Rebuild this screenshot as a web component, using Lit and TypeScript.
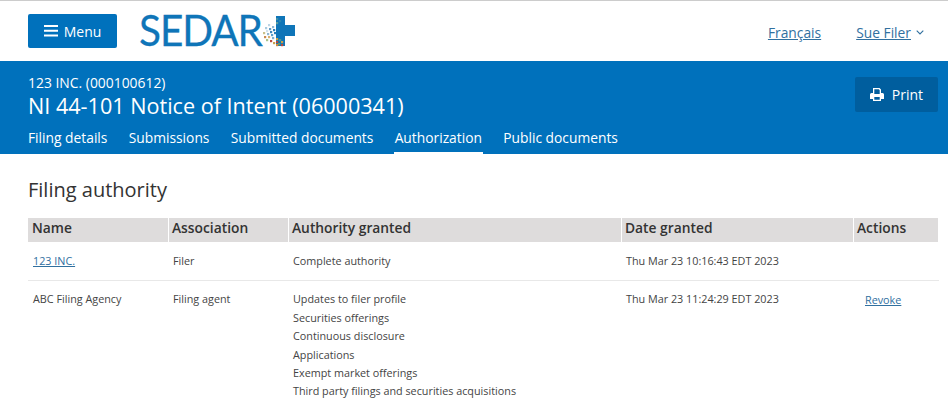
import { LitElement, html, css, svg } from "lit";
import { customElement } from "lit/decorators.js";

const pixels: [number, number, string][] = [
  [268,24,"#bcd5e5"],[272,26,"#8fb8d4"],[265,27,"#a9cbe0"],[269,28,"#5f9ac4"],[273,29,"#2f80bb"],
  [266,30,"#d2e2ec"],[270,31,"#3f86b9"],[274,32,"#2a7db9"],[263,32,"#c9c08a"],[267,33,"#8fb8d4"],
  [271,34,"#5a9fca"],[268,36,"#d9b070"],[264,36,"#c98a50"],[272,37,"#7fb0d0"],[266,39,"#a8c48a"],
  [270,40,"#b84b3c"],[273,42,"#c9a24a"],
  [276,18,"#3f8fa8"],[276,22,"#5fa0a0"],[279,20,"#2a86b0"],
  [276,38,"#c9a24a"],[279,39,"#4f9a8f"],[276,41,"#b84b3c"],[281,41,"#c9a24a"],[278,43,"#5f9a6f"],[276,44,"#d08a3a"],[281,44,"#b84b3c"],
];

@customElement("app-root")
export class AppRoot extends LitElement {
  static styles = css`
    :host { display: block; width: 948px; height: 410px; overflow: hidden; background: #fff; font-family: "Open Sans", sans-serif; color: #333; }
    a { color: #2a6496; text-decoration: underline; }
    .top { border-top: 1px solid #ccc; display: flex; align-items: center; padding: 0 24px 0 28px; box-sizing: border-box; height: 61px; }
    .menu { width: 89px; height: 34px; background: #0071bc; border-radius: 2px; color: #fff; display: flex; align-items: center; justify-content: center; gap: 6px; font-size: 14px; }
    .menu svg { display: block; }
    .logo { position: relative; margin-left: 22px; width: 160px; height: 46px; display: flex; align-items: center; }
    .logo-text { font-family: Lato, sans-serif; font-size: 42px; font-weight: 400; color: #0f75b8; letter-spacing: -1.1px; line-height: 44px; height: 46px; transform: scaleX(.965); transform-origin: left center; -webkit-text-stroke: .3px #0f75b8; }
    .logo svg { position: absolute; left: 0; top: 0; }
    .links { margin-left: auto; margin-top: 2px; display: flex; gap: 35px; font-size: 13.8px; }
    .links a { display: inline-flex; align-items: center; gap: 5px; color: #31709f; }
    .band { background: #0071bc; height: 93px; box-sizing: border-box; padding: 13px 10px 0 28px; display: flex; justify-content: space-between; color: #fff; }
    .org { font-size: 13.9px; line-height: 18px; }
    .title { font-size: 21.6px; line-height: 28px; }
    .tabs { display: flex; gap: 21.3px; margin-top: 8px; font-size: 13.8px; }
    .tab { padding: 0 1px 5px; line-height: 19px; border-bottom: 3px solid transparent; margin: 0 -1px; }
    .tab.on { border-bottom-color: #fff; }
    .print { margin-top: 3px; width: 83px; height: 35px; background: #005e9e; border-radius: 2px; display: flex; align-items: center; justify-content: center; gap: 8px; font-size: 14px; }
    .main { padding: 22px 10px 0 28px; }
    h2 { margin: 0 0 15px; font-size: 20px; font-weight: 400; line-height: 27px; color: #333; }
    .grid { display: grid; grid-template-columns: 140px 119px 332px 231px 84px; column-gap: 1px; }
    .th { background: #dedcdc; height: 24px; line-height: 19px; padding-left: 3px; font-size: 13.8px; font-weight: 600; color: #333; box-sizing: border-box; }
    .th.first { padding-left: 4px; }
    .td { font-size: 10.8px; line-height: 18.4px; padding: 10px 0 10px 4px; color: #444; }
    .td.first { padding-left: 5px; }
    .b { border-bottom: 1px solid #e8e8e8; margin-right: -1px; }
    .r2 { padding-top: 9px; }
    .td a { color: #31709f; }
    .revoke { padding-left: 11px; padding-top: 10px; }
  `;

  render() {
    const authorities = ["Updates to filer profile", "Securities offerings", "Continuous disclosure", "Applications", "Exempt market offerings", "Third party filings and securities acquisitions"];
    return html`
      <div class="top">
        <div class="menu">
          <svg width="14" height="12" viewBox="0 0 14 12"><path d="M0 1h14M0 5.800h14M0 10.600h14" stroke="#fff" stroke-width="2"/></svg>
          <span>Menu</span>
        </div>
        <div class="logo">
          <span class="logo-text">SEDAR</span>
          <svg width="160" height="46" viewBox="139 8 160 46">
            <path d="M276 16h9v9H295v11h-10v10H276z" fill="#0f75b8"/>
            ${pixels.map(([x, y, c]) => svg`<rect x=${x} y=${y} width="2.200" height="2.200" fill=${c}/>`)}
          </svg>
        </div>
        <div class="links">
          <a href="#">Français</a>
          <a href="#">Sue Filer
            <svg width="8" height="5" viewBox="0 0 8 5"><path d="M.7.7 4 4l3.300-3.300" fill="none" stroke="#31709f" stroke-width="1.100"/></svg>
          </a>
        </div>
      </div>
      <div class="band">
        <div>
          <div class="org">123 INC. (000100612)</div>
          <div class="title">NI 44-101 Notice of Intent (06000341)</div>
          <div class="tabs">
            <span class="tab">Filing details</span>
            <span class="tab">Submissions</span>
            <span class="tab">Submitted documents</span>
            <span class="tab on">Authorization</span>
            <span class="tab">Public documents</span>
          </div>
        </div>
        <div class="print">
          <svg width="14" height="13" viewBox="0 0 14 13"><path fill="#fff" fill-rule="evenodd" d="M3 0h6.500L11 1.500V5h1.500A1.500 1.500 0 0 1 14 6.500V11h-3v2H3v-2H0V6.500A1.500 1.500 0 0 1 1.500 5H3zm1.300 1.300V6h5.400V2.300L8.800 1.300zm0 7.700v2.700h5.400V9z"/></svg>
          <span>Print</span>
        </div>
      </div>
      <div class="main">
        <h2>Filing authority</h2>
        <div class="grid">
          <div class="th first">Name</div><div class="th">Association</div><div class="th">Authority granted</div><div class="th">Date granted</div><div class="th">Actions</div>
          <div class="td first b"><a href="#">123 INC.</a></div><div class="td b">Filer</div><div class="td b">Complete authority</div><div class="td b">Thu Mar 23 10:16:43 EDT 2023</div><div class="td b"></div>
          <div class="td first r2">ABC Filing Agency</div><div class="td r2">Filing agent</div>
          <div class="td r2">${authorities.map((a) => html`<div>${a}</div>`)}</div>
          <div class="td r2">Thu Mar 23 11:24:29 EDT 2023</div>
          <div class="td revoke"><a href="#">Revoke</a></div>
        </div>
      </div>
    `;
  }
}
